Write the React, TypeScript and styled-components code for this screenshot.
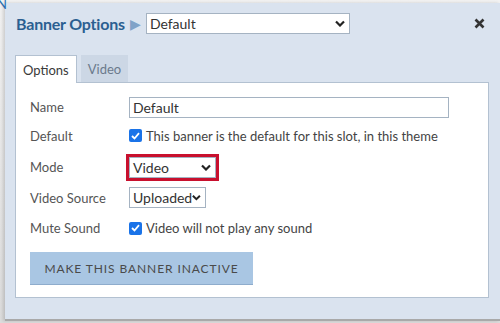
import styled, { createGlobalStyle } from "styled-components";

const GlobalStyle = createGlobalStyle`
  html, body {
    margin: 0;
    padding: 0;
    background: linear-gradient(#f2f2f2, #dcdcdc);
    font-family: Lato, "Open Sans", Arial, sans-serif;
  }
`;

const Page = styled.div`
  position: relative;
  width: 500px;
  height: 323px;
  overflow: hidden;
  padding: 3px 0 0 5px;
  box-sizing: border-box;
`;

const Corner = styled.span`
  position: absolute;
  left: -3px;
  top: -4px;
  font-size: 13px;
  color: #2a6fb0;
`;

const Dialog = styled.div`
  background: #dae3ef;
  height: 318px;
  border-bottom: 2px solid #a9a9a9;
  box-sizing: border-box;
  padding: 10px 11px 0 10px;
  box-shadow: -2px 0 3px rgba(0, 0, 0, 0.15);
`;

const Header = styled.div`
  display: flex;
  align-items: center;
  height: 21px;
`;

const Title = styled.h1`
  margin: 0 0 0 1px;
  font-size: 16px;
  font-weight: 700;
  color: #2b5f91;
  letter-spacing: -0.2px;
`;

const Arrow = styled.span`
  color: #7fa2c8;
  font-size: 14px;
  margin: 0 5px 0 5px;
`;

const Select = styled.div<{ $width: number }>`
  display: flex;
  align-items: center;
  justify-content: space-between;
  width: ${(p) => p.$width}px;
  height: 21px;
  box-sizing: border-box;
  background: #fff;
  border: 1px solid #a5b3c2;
  padding: 0 4px 0 3px;
  font-size: 14px;
  color: #333;
`;

const Close = styled.span`
  margin-left: auto;
  margin-right: 4px;
  display: flex;
`;

const Tabs = styled.div`
  display: flex;
  gap: 4px;
  margin-top: 21px;
  height: 27px;
`;

const Tab = styled.div<{ $active?: boolean }>`
  display: flex;
  align-items: center;
  padding: 0 ${(p) => (p.$active ? 7 : 6)}px;
  font-size: 13px;
  box-sizing: border-box;
  color: ${(p) => (p.$active ? "#3a3a3a" : "#6b7a8c")};
  background: ${(p) => (p.$active ? "#fff" : "#ccd7e5")};
  border: 1px solid ${(p) => (p.$active ? "#b3c1d1" : "#ccd7e5")};
  border-bottom: none;
  height: ${(p) => (p.$active ? "28px" : "27px")};
  position: relative;
  z-index: 1;
`;

const Panel = styled.div`
  background: #fff;
  border: 1px solid #b3c1d1;
  height: 216px;
  box-sizing: border-box;
  padding: 12px 14px 0 14px;
`;

const Row = styled.div<{ $height: number }>`
  display: grid;
  grid-template-columns: 99px 1fr;
  align-items: center;
  height: ${(p) => p.$height}px;
`;

const Label = styled.span`
  font-size: 13px;
  color: #555;
`;

const Input = styled.div`
  width: 320px;
  height: 21px;
  box-sizing: border-box;
  border: 1px solid #a5b3c2;
  padding: 0 3px;
  font-size: 14px;
  color: #333;
  display: flex;
  align-items: center;
`;

const CheckLine = styled.label`
  display: flex;
  align-items: center;
  gap: 4px;
  font-size: 13px;
  color: #444;
`;

const Box = styled.span`
  width: 13px;
  height: 13px;
  border-radius: 2px;
  background: #1a73e8;
  display: flex;
  align-items: center;
  justify-content: center;
`;

const Highlight = styled.div`
  display: inline-flex;
  border: 3px solid #c8102e;
  margin-left: -3px;
  width: fit-content;
`;

const Button = styled.button`
  margin-top: 9px;
  width: 223px;
  height: 33px;
  border: none;
  border-bottom: 1px solid #8eaccc;
  background: #a9c6e3;
  color: #4a4a4a;
  font-family: inherit;
  font-size: 12px;
  letter-spacing: 0.9px;
  padding: 0;
`;

const Chevron = () => (
  <svg width="10" height="7" viewBox="0 0 10 7">
    <path d="M1 1.5 L5 5.5 L9 1.5" stroke="#222" strokeWidth="2.2" fill="none" />
  </svg>
);

const Check = () => (
  <svg width="9" height="8" viewBox="0 0 9 8">
    <path d="M1 4 L3.5 6.5 L8 1.2" stroke="#fff" strokeWidth="1.8" fill="none" />
  </svg>
);

export default function App() {
  return (
    <>
      <GlobalStyle />
      <Page>
        <Corner>N</Corner>
        <Dialog>
          <Header>
            <Title>Banner Options</Title>
            <Arrow>▶</Arrow>
            <Select $width={204}>
              Default
              <Chevron />
            </Select>
            <Close>
              <svg width="11" height="11" viewBox="0 0 11 11">
                <path d="M1.5 1.5 L9.5 9.5 M9.5 1.5 L1.5 9.5" stroke="#333" strokeWidth="2.6" />
              </svg>
            </Close>
          </Header>
          <Tabs>
            <Tab $active>Options</Tab>
            <Tab>Video</Tab>
          </Tabs>
          <Panel>
            <Row $height={24}>
              <Label>Name</Label>
              <Input>Default</Input>
            </Row>
            <Row $height={33}>
              <Label>Default</Label>
              <CheckLine>
                <Box>
                  <Check />
                </Box>
                This banner is the default for this slot, in this theme
              </CheckLine>
            </Row>
            <Row $height={30}>
              <Label>Mode</Label>
              <Highlight>
                <Select $width={87}>
                  Video
                  <Chevron />
                </Select>
              </Highlight>
            </Row>
            <Row $height={31}>
              <Label>Video Source</Label>
              <Select $width={77}>
                Uploaded
                <Chevron />
              </Select>
            </Row>
            <Row $height={30}>
              <Label>Mute Sound</Label>
              <CheckLine>
                <Box>
                  <Check />
                </Box>
                Video will not play any sound
              </CheckLine>
            </Row>
            <Button>MAKE THIS BANNER INACTIVE</Button>
          </Panel>
        </Dialog>
      </Page>
    </>
  );
}
